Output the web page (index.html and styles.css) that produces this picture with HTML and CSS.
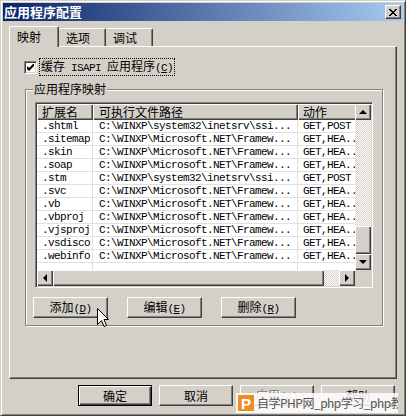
FILE: index.html
```html
<!DOCTYPE html>
<html lang="zh-CN">
<head>
    <meta charset="UTF-8">
    <title>应用程序配置</title>
    <link rel="stylesheet" href="styles.css">
</head>
<body>
    <div class="window">
        <div class="titlebar">
            <span class="title">应用程序配置</span>
            <span class="close">
                <svg width="8" height="7" viewBox="0 0 8 7"><path d="M0 0L7 7M1 0L8 7M7 0L0 7M8 0L1 7" stroke="#000" stroke-width="1"/></svg>
            </span>
        </div>

        <div class="body">
            <div class="tabs">
                <div class="tab active">映射</div>
                <div class="tab">选项</div>
                <div class="tab">调试</div>
            </div>

            <div class="panel">
                <div class="check-row">
                    <span class="checkbox">
                        <svg width="7" height="7" viewBox="0 0 7 7"><path d="M0 2v3l2 2l5-5v-3l-5 5z" fill="#000"/></svg>
                    </span>
                    <span class="check-label">缓存<span class="a"> ISAPI </span>应用程序<span class="a">(<u>C</u>)</span></span>
                </div>

                <div class="group">
                    <span class="group-title">应用程序映射</span>

                    <div class="list">
                        <div class="list-body">
                            <div class="grid">
                                <div class="row head">
                                    <div class="cell c1">扩展名</div>
                                    <div class="cell c2">可执行文件路径</div>
                                    <div class="cell c3">动作</div>
                                </div>
                                <div class="row"><div class="cell c1">.shtml</div><div class="cell c2">C:\WINXP\system32\inetsrv\ssi...</div><div class="cell c3">GET,POST</div></div>
                                <div class="row"><div class="cell c1">.sitemap</div><div class="cell c2">C:\WINXP\Microsoft.NET\Framew...</div><div class="cell c3">GET,HEA..</div></div>
                                <div class="row"><div class="cell c1">.skin</div><div class="cell c2">C:\WINXP\Microsoft.NET\Framew...</div><div class="cell c3">GET,HEA..</div></div>
                                <div class="row"><div class="cell c1">.soap</div><div class="cell c2">C:\WINXP\Microsoft.NET\Framew...</div><div class="cell c3">GET,HEA..</div></div>
                                <div class="row"><div class="cell c1">.stm</div><div class="cell c2">C:\WINXP\system32\inetsrv\ssi...</div><div class="cell c3">GET,POST</div></div>
                                <div class="row"><div class="cell c1">.svc</div><div class="cell c2">C:\WINXP\Microsoft.NET\Framew...</div><div class="cell c3">GET,HEA..</div></div>
                                <div class="row"><div class="cell c1">.vb</div><div class="cell c2">C:\WINXP\Microsoft.NET\Framew...</div><div class="cell c3">GET,HEA..</div></div>
                                <div class="row"><div class="cell c1">.vbproj</div><div class="cell c2">C:\WINXP\Microsoft.NET\Framew...</div><div class="cell c3">GET,HEA..</div></div>
                                <div class="row"><div class="cell c1">.vjsproj</div><div class="cell c2">C:\WINXP\Microsoft.NET\Framew...</div><div class="cell c3">GET,HEA..</div></div>
                                <div class="row"><div class="cell c1">.vsdisco</div><div class="cell c2">C:\WINXP\Microsoft.NET\Framew...</div><div class="cell c3">GET,HEA..</div></div>
                                <div class="row"><div class="cell c1">.webinfo</div><div class="cell c2">C:\WINXP\Microsoft.NET\Framew...</div><div class="cell c3">GET,HEA..</div></div>
                                <div class="row blank"><div class="cell c1"></div><div class="cell c2"></div><div class="cell c3"></div></div>
                            </div>
                            <div class="vscroll">
                                <span class="sbtn"><i class="arrow up"></i></span>
                                <span class="track"></span>
                                <span class="thumb v"></span>
                                <span class="sbtn"><i class="arrow down"></i></span>
                            </div>
                        </div>
                        <div class="hrow">
                            <div class="hscroll">
                                <span class="sbtn"><i class="arrow left"></i></span>
                                <span class="thumb h"></span>
                                <span class="track h"></span>
                                <span class="sbtn"><i class="arrow right"></i></span>
                            </div>
                            <span class="corner"></span>
                        </div>
                    </div>

                    <div class="group-buttons">
                        <button class="btn">添加<span class="a">(<u>D</u>)</span></button>
                        <button class="btn">编辑<span class="a">(<u>E</u>)</span></button>
                        <button class="btn">删除<span class="a">(<u>R</u>)</span></button>
                    </div>
                </div>
            </div>

            <div class="footer">
                <button class="btn default">确定</button>
                <button class="btn">取消</button>
                <button class="btn disabled">应用<span class="a">(<u>A</u>)</span></button>
                <button class="btn">帮助</button>
            </div>
        </div>

        <div class="watermark">
            <span class="wm-logo">P</span>
            <span class="wm-text">自学PHP网_php学习_php教程</span>
        </div>

        <svg class="cursor" width="12" height="20" viewBox="0 0 12 20">
            <path d="M0.5 0.5V16.5L4.5 12.5L7 18.5L9.5 17.5L7 11.5H11.5Z" fill="#fff" stroke="#000" stroke-width="1"/>
        </svg>
    </div>
</body>
</html>
```

FILE: styles.css
```css
* {
    box-sizing: border-box;
}

body {
    margin: 0;
    background: #d4d0c8;
    font-family: "Noto Sans CJK SC", "Liberation Sans", sans-serif;
    font-size: 12px;
    color: #000;
}

.a {
    font-family: "Liberation Mono", "DejaVu Sans Mono", monospace;
    font-size: 11px;
    letter-spacing: -0.6px;
}

.window {
    position: relative;
    width: 406px;
    height: 416px;
    padding: 2px;
    overflow: hidden;
    background: #d4d0c8;
    border: 1px solid;
    border-color: #d4d0c8 #404040 #404040 #d4d0c8;
    box-shadow: inset 1px 1px #fff, inset -1px -1px #808080;
}

.titlebar {
    height: 18px;
    display: flex;
    align-items: center;
    justify-content: space-between;
    padding: 0 2px 0 1px;
    background: linear-gradient(90deg, #0a246a, #a6caf0);
}

.title {
    color: #fff;
    font-weight: bold;
    font-size: 13px;
    line-height: 16px;
}

.close {
    width: 16px;
    height: 14px;
    display: flex;
    align-items: center;
    justify-content: center;
    background: #d4d0c8;
    border: 1px solid;
    border-color: #fff #404040 #404040 #fff;
    box-shadow: inset -1px -1px #808080;
}

.body {
    padding: 5px 6px 0 6px;
}

/* tabs */
.tabs {
    display: flex;
    align-items: flex-start;
    height: 20px;
}

.tab {
    width: 47px;
    height: 18px;
    margin-top: 2px;
    padding-left: 7px;
    line-height: 17px;
    background: #d4d0c8;
    border-top: 1px solid #fff;
    border-left: 1px solid #fff;
    border-right: 1px solid #404040;
    box-shadow: inset -1px 0 #808080;
    border-top-left-radius: 2px;
    border-top-right-radius: 2px;
}

.tab.active {
    position: relative;
    z-index: 1;
    width: 50px;
    height: 21px;
    margin-top: 0;
    padding-left: 7px;
    line-height: 20px;
}

.tab + .tab {
    border-left: none;
}

.panel {
    width: 388px;
    height: 333px;
    padding: 12px 0 0 14px;
    border-top: 1px solid #fff;
    border-left: 1px solid #fff;
    border-right: 1px solid #404040;
    border-bottom: 1px solid #404040;
    box-shadow: inset -1px -1px #808080;
}

/* checkbox */
.check-row {
    display: flex;
    align-items: center;
    height: 16px;
}

.checkbox {
    width: 13px;
    height: 13px;
    display: flex;
    align-items: center;
    justify-content: center;
    background: #fff;
    border: 1px solid;
    border-color: #808080 #fff #fff #808080;
    box-shadow: inset 1px 1px #404040, inset -1px -1px #d4d0c8;
}

.check-label {
    margin-left: 3px;
    padding: 0 1px;
    line-height: 14px;
    outline: 1px dotted #000;
}

/* group box */
.group {
    position: relative;
    width: 358px;
    height: 237px;
    margin: 14px 0 0 1px;
    padding: 12px 0 0 9px;
    border: 1px solid #808080;
    box-shadow: 1px 1px #fff, inset 1px 1px #fff;
}

.group-title {
    position: absolute;
    top: -8px;
    left: 7px;
    padding: 0 1px;
    line-height: 14px;
    background: #d4d0c8;
}

/* list view */
.list {
    width: 338px;
    height: 186px;
    padding: 1px;
    background: #fff;
    border: 1px solid;
    border-color: #808080 #fff #fff #808080;
    box-shadow: inset 1px 1px #404040, inset -1px -1px #d4d0c8;
}

.list-body {
    display: flex;
    height: 166px;
}

.grid {
    width: 318px;
    overflow: hidden;
    font-family: "Liberation Mono", "DejaVu Sans Mono", monospace;
    font-size: 11px;
    letter-spacing: -0.6px;
}

.row {
    display: grid;
    grid-template-columns: 56px 205px 80px;
    height: 13px;
    line-height: 12px;
}

.cell {
    white-space: nowrap;
    overflow: hidden;
    border-right: 1px solid #e0e0e0;
    border-bottom: 1px solid #e0e0e0;
}

.c1 {
    padding-left: 5px;
}

.c2 {
    padding-left: 6px;
}

.c3 {
    padding-left: 5px;
}

.row.head {
    height: 16px;
    line-height: 15px;
    letter-spacing: 0;
    font-family: "Noto Sans CJK SC", sans-serif;
    font-size: 12px;
}

.row.head .cell {
    background: #d4d0c8;
    border: none;
    box-shadow: inset 1px 1px #fff, inset -1px -1px #404040, inset -2px -2px #808080;
}

.row.blank {
    height: 7px;
}

.row.blank .cell {
    border-bottom: none;
}

/* scrollbars */
.vscroll {
    width: 16px;
    display: flex;
    flex-direction: column;
}

.sbtn,
.thumb,
.corner {
    display: flex;
    align-items: center;
    justify-content: center;
    flex: none;
    background: #d4d0c8;
    box-shadow: inset 1px 1px #fff, inset -1px -1px #404040, inset -2px -2px #808080;
}

.sbtn {
    width: 16px;
    height: 16px;
}

.track {
    flex: 1;
    background: repeating-conic-gradient(#fff 0 25%, #d4d0c8 0 50%) 0 0 / 2px 2px;
}

.track.h {
    flex: none;
    width: 15px;
}

.thumb.v {
    height: 28px;
}

.thumb.h {
    flex: 1;
}

.corner {
    width: 16px;
    height: 16px;
    box-shadow: none;
}

.hrow {
    display: flex;
    height: 16px;
}

.hscroll {
    display: flex;
    width: 318px;
}

.arrow {
    width: 0;
    height: 0;
    border: 4px solid transparent;
}

.arrow.up {
    border-top: none;
    border-bottom-color: #000;
}

.arrow.down {
    border-bottom: none;
    border-top-color: #000;
}

.arrow.left {
    border-left: none;
    border-right-color: #000;
}

.arrow.right {
    border-right: none;
    border-left-color: #000;
}

/* buttons */
.btn {
    width: 75px;
    height: 21px;
    padding: 0;
    font-family: "Noto Sans CJK SC", sans-serif;
    font-size: 12px;
    line-height: 17px;
    color: #000;
    background: #d4d0c8;
    border: 1px solid;
    border-color: #fff #404040 #404040 #fff;
    box-shadow: inset -1px -1px #808080;
}

.group-buttons {
    display: flex;
    gap: 19px;
    margin: 9px 0 0 -2px;
}

.footer {
    display: flex;
    justify-content: flex-end;
    gap: 7px;
    padding: 6px 2px 0 0;
}

.footer .btn {
    width: 74px;
}

.btn.default {
    border: 1px solid #000;
    box-shadow: inset 1px 1px #fff, inset -1px -1px #404040, inset -2px -2px #808080;
}

.btn.disabled {
    color: #808080;
    text-shadow: 1px 1px #fff;
}

/* overlays */
.watermark {
    position: absolute;
    left: 235px;
    top: 392px;
    width: 162px;
    height: 20px;
    display: flex;
    align-items: center;
    gap: 3px;
    padding-left: 2px;
    overflow: hidden;
    white-space: nowrap;
    background: rgba(255, 255, 255, 0.85);
}

.wm-logo {
    width: 16px;
    height: 16px;
    flex: none;
    display: flex;
    align-items: center;
    justify-content: center;
    background: #f08a24;
    color: #fff;
    font-family: "Liberation Sans", sans-serif;
    font-weight: bold;
    font-size: 15px;
}

.wm-text {
    color: #555;
    font-size: 12px;
    line-height: 16px;
    letter-spacing: -0.5px;
}

.cursor {
    position: absolute;
    left: 96px;
    top: 307px;
}
```
